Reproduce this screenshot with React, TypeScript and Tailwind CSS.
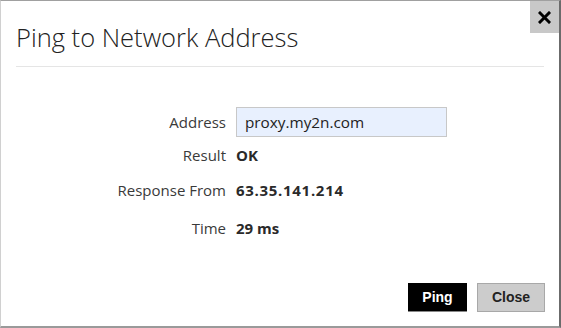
import React from "react";

export default function App() {
  const font = { fontFamily: '"Open Sans", "Noto Sans", sans-serif' };
  const btnFont = { fontFamily: '"Liberation Sans", Arial, sans-serif' };
  return (
    <div
      className="relative w-[561px] h-[328px] bg-white border-t border-t-[#a0a0a0] border-l border-l-[#d0d0d0] border-r-2 border-r-[#6b6b6b] border-b-2 border-b-[#9a9a9a] text-[#333]"
      style={font}
    >
      <button className="absolute top-0 right-0 w-[29px] h-[32px] bg-[#c8c8c8] flex items-center justify-center">
        <svg width="13" height="13" viewBox="0 0 13 13">
          <path d="M2 2 L11 11 M11 2 L2 11" stroke="#000" strokeWidth="3" strokeLinecap="square" />
        </svg>
      </button>
      <div className="pl-[15px] pt-[20px] text-[25.5px] font-light leading-[32px] text-[#222]">
        Ping to Network Address
      </div>
      <div className="mx-[15px] mt-[13px] h-px bg-[#e5e5e5]" />
      <div className="mt-[40px] grid grid-cols-[225px_1fr] gap-x-[10px] text-[15px] text-[#3a3a3a]">
        <div className="flex items-center justify-end h-[30px]">Address</div>
        <div className="h-[30px] w-[211px] border border-[#c8c8c8] bg-[#e8f0fe] flex items-center pl-[8px] text-[15.3px] text-[#222]">
          proxy.my2n.com
        </div>
        <div className="mt-[8px] flex items-center justify-end h-[20px]">Result</div>
        <div className="mt-[8px] flex items-center h-[20px] font-bold text-[#2a2a2a]">OK</div>
        <div className="mt-[15px] flex items-center justify-end h-[20px]">Response From</div>
        <div className="mt-[15px] flex items-center h-[20px] font-bold text-[#2a2a2a] tracking-[0.7px]">63.35.141.214</div>
        <div className="mt-[18px] flex items-center justify-end h-[20px]">Time</div>
        <div className="mt-[18px] flex items-center h-[20px] font-bold text-[#2a2a2a]">29 ms</div>
      </div>
      <div className="absolute right-[14px] bottom-[14px] flex gap-[10px]">
        <button className="w-[59px] h-[29px] bg-black text-white font-bold text-[14px] border-b border-b-[#888]" style={btnFont}>
          Ping
        </button>
        <button className="w-[68px] h-[29px] bg-[#cccccc] border border-[#a8a8a8] text-[#222] font-bold text-[14px]" style={btnFont}>
          Close
        </button>
      </div>
    </div>
  );
}
